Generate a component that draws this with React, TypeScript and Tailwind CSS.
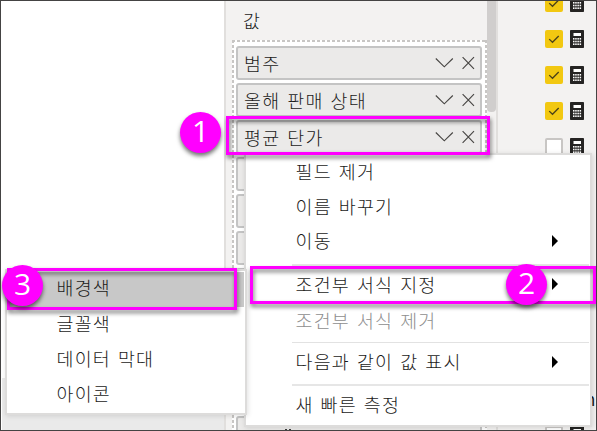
import React from 'react';

const Calculator = () => (
  <svg width="14" height="18" viewBox="0 0 14 18" className="block shrink-0">
    <rect width="14" height="18" rx="0.7" fill="#252423" />
    <rect x="3.5" y="3" width="7.5" height="3" fill="#fff" />
    {[8, 10.7, 13.4].map((y) =>
      [3, 5.2, 7.4, 9.6].map((x) => <rect key={`${x}-${y}`} x={x} y={y} width="1.5" height="1.6" fill="#fff" />),
    )}
  </svg>
);

const FieldRow = ({ checked }: { checked: boolean }) => (
  <div className="flex h-[18px] shrink-0 items-center gap-[7px]">
    {checked ? (
      <span className="flex size-[18px] shrink-0 items-center justify-center rounded-[2px] bg-[#f2c811]">
        <svg width="18" height="18" viewBox="0 0 18 18" fill="none" stroke="#4b4219" strokeWidth="1.3">
          <path d="M4.2 9.1 7.5 12.3 13.7 6" />
        </svg>
      </span>
    ) : (
      <span className="size-[18px] shrink-0 rounded-[2px] border-2 border-[#c8c6c4] bg-white" />
    )}
    <Calculator />
  </div>
);

const Well = ({ label }: { label: string }) => (
  <div className="flex h-[34px] shrink-0 items-center rounded-[3px] border-2 border-[#c4c4c4] bg-[#ebeae9] pl-[6px] pr-[4px]">
    <span className="flex-1 whitespace-nowrap leading-none">{label}</span>
    {label && (
      <svg width="42" height="18" viewBox="0 0 42 18" fill="none" stroke="#484644" strokeWidth="1.15">
        <path d="M1.8 4.5 10.3 12.8 18.8 4.5M28.6 3.2 40 14.8M40 3.2 28.6 14.8" />
      </svg>
    )}
  </div>
);

const MenuRow = ({ label, arrow = false, className }: { label: string; arrow?: boolean; className: string }) => (
  <div className={`flex shrink-0 items-center justify-between pl-[49.5px] pr-[32px] ${className}`}>
    <span className="whitespace-nowrap leading-none">{label}</span>
    {arrow && (
      <svg width="6" height="12" viewBox="0 0 6 12">
        <path d="M0 0 6 6 0 12Z" fill="#000" />
      </svg>
    )}
  </div>
);

const Step = ({ n, className }: { n: number; className: string }) => (
  <div
    className={`absolute flex size-[41px] items-center justify-center rounded-full bg-[#ff00ff] pb-[3px] font-['Open_Sans',sans-serif] text-[30px] font-medium leading-none tracking-normal text-white shadow-[0_3px_4px_rgba(0,0,0,0.55)] ${className}`}
  >
    {n}
  </div>
);

const Highlight = ({ className }: { className: string }) => (
  <div className={`absolute border-[3px] border-[#ff00ff] drop-shadow-[1px_3px_2px_rgba(0,0,0,0.55)] ${className}`} />
);

const wells = ['범주', '올해 판매 상태', '평균 단가', '', '', '', '', '', '', '', ''];
const fields = [true, true, true, true, false, false, false, false, false, false, false, false, false];

export default function App() {
  return (
    <div className="relative h-[431px] w-[597px] overflow-hidden bg-white font-['Noto_Sans_CJK_KR',sans-serif] text-[18.4px] font-light tracking-[1.25px] text-[#1b1a19] [word-spacing:1.6px]">
      <div className="flex h-full">
        <div className="flex w-[224px] shrink-0 flex-col justify-end pl-[2px]">
          <div className="h-[53px] bg-[#eaeaea]" />
        </div>
        <div className="flex w-[274px] shrink-0 border-x-2 border-[#e1dfdd] bg-[#f3f2f1]">
          <div className="flex w-[261px] shrink-0 flex-col pl-[6px]">
            <div className="flex h-[40px] shrink-0 items-center pl-[11px] leading-none">값</div>
            <div className="flex w-[255px] flex-col gap-[3px] bg-white py-[6px] pl-[4px] pr-[5px] [background-image:linear-gradient(90deg,#c8c6c4_3px,transparent_3px),linear-gradient(#c8c6c4_3px,transparent_3px),linear-gradient(#c8c6c4_3px,transparent_3px)] [background-position:left_top,left_top,right_top] [background-repeat:repeat-x,repeat-y,repeat-y] [background-size:5px_2px,2px_5px,2px_5px]">
              {wells.map((label, i) => (
                <Well key={i} label={label} />
              ))}
            </div>
          </div>
          <div className="h-[112px] w-[9px] rounded-b-[4px] bg-[#d0cecd]" />
        </div>
        <div className="-mt-[6px] flex flex-1 flex-col gap-[18px] bg-[#f3f2f1] pl-[47px]">
          {fields.map((checked, i) => (
            <FieldRow key={i} checked={checked} />
          ))}
        </div>
      </div>

      <span className="absolute left-[585px] top-[389px] text-[17px] font-normal leading-[20px] tracking-normal">n</span>

      <div className="absolute left-[244px] top-[153px] flex h-[274px] w-[348px] flex-col border-2 border-[#dddcdb] bg-white shadow-[1px_1px_5px_rgba(0,0,0,0.12)]">
        <MenuRow label="필드 제거" className="h-[34px] pb-px" />
        <MenuRow label="이름 바꾸기" className="h-[36px] pb-[2px]" />
        <MenuRow label="이동" arrow className="mb-[7px] h-[32px] pb-px" />
        <div className="ml-[46px] mr-px h-[2px] bg-[#e6e6e6]" />
        <MenuRow label="조건부 서식 지정" arrow className="h-[38px] pb-[2px]" />
        <MenuRow label="조건부 서식 제거" className="mb-[5px] h-[33px] pb-px text-[#8e8e8e]" />
        <div className="ml-[46px] mr-px h-px bg-[#e2e2e2]" />
        <MenuRow label="다음과 같이 값 표시" arrow className="mb-[2px] h-[39px] pb-[2px]" />
        <div className="ml-[46px] mr-px h-[2px] bg-[#e6e6e6]" />
        <MenuRow label="새 빠른 측정" className="h-[39px] pb-[2px]" />
      </div>

      <div className="absolute left-[5px] top-[269px] flex h-[146px] w-[242px] flex-col border-2 border-[#dddcdb] bg-white pt-px shadow-[1px_1px_5px_rgba(0,0,0,0.12)]">
        <MenuRow label="배경색" className="mr-px h-[35px] bg-[#c8c8c8] pb-[4px]" />
        <MenuRow label="글꼴색" className="h-[35px] pb-[3px]" />
        <MenuRow label="데이터 막대" className="h-[35px] pb-[3px]" />
        <MenuRow label="아이콘" className="h-[35px] pb-[3px]" />
      </div>

      <Highlight className="left-[226px] top-[116px] h-[39px] w-[264px]" />
      <Highlight className="left-[250px] top-[266px] h-[38px] w-[346px]" />
      <Highlight className="left-[7px] top-[268px] h-[42px] w-[230px]" />
      <Step n={1} className="left-[180px] top-[112px]" />
      <Step n={2} className="left-[506px] top-[264px]" />
      <Step n={3} className="left-[2px] top-[265px]" />

      <div className="absolute left-[285px] top-[429px] flex gap-[2px]">
        <span className="size-[2px] bg-[#3b3a39]" />
        <span className="size-[2px] bg-[#3b3a39]" />
      </div>
      <div className="pointer-events-none absolute inset-0 border border-[#444343]" />
    </div>
  );
}
